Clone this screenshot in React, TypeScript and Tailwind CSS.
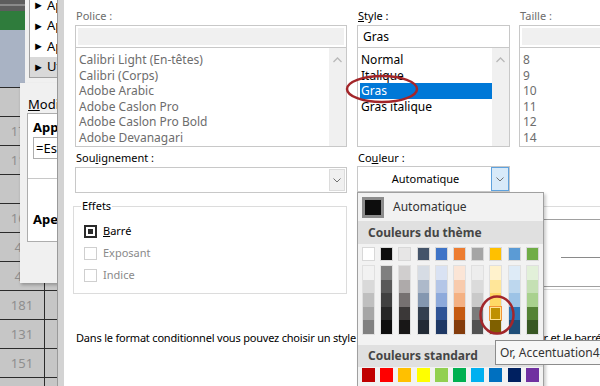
const themeTop = ["#ffffff", "#0d0d0d", "#e7e6e6", "#44546a", "#3f74c7", "#ed7d31", "#a5a5a5", "#ffc000", "#5b9bd5", "#70ad47"];

const themeShades = [
  ["#f2f2f2", "#d9d9d9", "#bfbfbf", "#a6a6a6", "#808080"],
  ["#7f7f7f", "#595959", "#404040", "#262626", "#0d0d0d"],
  ["#d0cece", "#aeaaaa", "#767171", "#3b3838", "#181717"],
  ["#d6dce4", "#adb9ca", "#8497b0", "#333f4f", "#222a35"],
  ["#d9e2f3", "#b4c6e7", "#8eaadb", "#2f5496", "#1f3864"],
  ["#fbe5d6", "#f8cbad", "#f4b183", "#c55a11", "#843c0c"],
  ["#ededed", "#dbdbdb", "#c9c9c9", "#7b7b7b", "#525252"],
  ["#fff2cc", "#ffe699", "#ffd966", "#bf9000", "#7f6000"],
  ["#deebf7", "#bdd7ee", "#9dc3e6", "#2e75b6", "#1f4e79"],
  ["#e2f0d9", "#c5e0b4", "#a9d18e", "#548235", "#385723"],
];

const standard = ["#c00000", "#ff0000", "#ffc000", "#ffff00", "#92d050", "#00b050", "#00b0f0", "#0070c0", "#002060", "#7030a0"];

const sheetRows = ["", "176", "115", "", "163", "45", "47", "181", "131", "151", ""];

function ChevronUp() {
  return (
    <svg width="9" height="6" viewBox="0 0 9 6">
      <path d="M0.5 5 L4.5 1 L8.5 5" fill="none" stroke="#b9b9b9" strokeWidth="1.3" />
    </svg>
  );
}

function ChevronDown() {
  return (
    <svg width="8" height="5" viewBox="0 0 8 5">
      <path d="M0.5 0.5 L4 4 L7.5 0.5" fill="none" stroke="#707070" strokeWidth="1" />
    </svg>
  );
}

function ListBox({ items, muted, selected, scroll }: { items: string[]; muted?: boolean; selected?: number; scroll?: boolean }) {
  return (
    <div className="flex h-[99px] border border-t-0 border-[#c8c8c8] bg-white">
      <div className="flex-1 pt-[4px] pl-[2px] overflow-hidden">
        {items.map((t, i) => (
          <div
            key={t}
            className={
              "h-[15.5px] leading-[15.5px] pl-[1px] whitespace-nowrap " +
              (i === selected ? "bg-[#0078d7] text-white" : muted ? "text-[#6d6d6d]" : "text-black")
            }
          >
            {t}
          </div>
        ))}
      </div>
      {scroll && (
        <div className="w-[17px] bg-[#f0f0f0] flex justify-center pt-[9px]">
          <ChevronUp />
        </div>
      )}
    </div>
  );
}

function EditBox({ value, disabled }: { value?: string; disabled?: boolean }) {
  return (
    <div className="h-[23px] border border-[#c8c8c8] bg-white p-[2px]">
      <div className={"h-full pl-[3px] leading-[17px] " + (disabled ? "bg-[#f0f0f0]" : "")}>{value}</div>
    </div>
  );
}

export default function App() {
  return (
    <div className="relative w-[600px] h-[386px] overflow-hidden bg-[#c6c6c6] text-[12px] text-black [font-family:'Noto_Sans',sans-serif]">
      {/* spreadsheet in the background */}
      <div className="absolute inset-0">
        <div className="h-[11px] bg-[#5d5d5d] pt-[4px]">
          <div className="h-[2px] bg-[#8a8a8a]" />
        </div>
        <div className="h-[19px] bg-[#2f7c3c]" />
        <div className="h-[57px] bg-[#a9b3c4]" />
        {sheetRows.map((v, i) => (
          <div key={i} className="h-[29px] flex border-t border-[#2b2b2b] bg-[#c6c6c6]">
            <div className="w-[45px] border-r border-[#2b2b2b] text-center leading-[28px] text-[13px] text-[#8e8e8e]">{v}</div>
            <div className="flex-1" />
          </div>
        ))}
      </div>

      {/* rule dialog behind: rule type list */}
      <div className="absolute left-[25px] top-0 w-[40px] h-[83px] bg-[#f0f0f0] pl-[4px]">
        <div className="h-[78px] border-l border-b border-[#a0a0a0] bg-white text-[13px] overflow-hidden">
          {["Ap", "Ap", "Ap", "Ut"].map((t, i) => (
            <div
              key={i}
              className={"h-[20.5px] flex items-center gap-[3px] pl-[3px] whitespace-nowrap " + (i === 3 ? "bg-[#d9d9d9]" : "")}
              style={{ marginTop: i === 0 ? -5 : 0 }}
            >
              <span className="text-[11px]">►</span>
              <span>{t}</span>
            </div>
          ))}
        </div>
      </div>

      {/* rule dialog behind: description */}
      <div className="absolute left-[20px] top-[83px] w-[45px] h-[200px] bg-[#f0f0f0] pl-[7px] shadow-[1px_2px_3px_rgba(0,0,0,0.25)] text-[13px]">
        <div className="h-[30px] pt-[12px] leading-[18px] pl-[1px]">
          <span className="underline">M</span>odif
        </div>
        <div className="h-[129px] border border-[#adadad] bg-white pl-[5px] pt-[4px] overflow-hidden">
          <div className="font-bold leading-[18px]">Appl</div>
          <div className="h-[22px] mt-[1px] border border-[#adadad] pl-[2px] leading-[20px] whitespace-nowrap">=EstN</div>
          <div className="-ml-[5px] mt-[19px] border-t border-[#c8c8c8]" />
          <div className="font-bold mt-[31px]">Aper</div>
        </div>
      </div>

      {/* main Format Cells dialog */}
      <div className="absolute left-[57px] top-0 right-0 bottom-0 flex">
        <div className="w-[7px] border-l border-[#9a9a9a] bg-[#d3d3d3]" />
        <div className="flex-1 bg-white pl-[11px] pt-[7px] overflow-hidden whitespace-nowrap">
          <div className="flex">
            <div className="w-[272px] shrink-0">
              <div className="h-[18px] leading-[18px] text-[11px] text-[#6d6d6d] pl-[1px]">Police :</div>
              <EditBox disabled />
              <ListBox
                muted
                scroll
                items={["Calibri Light (En-têtes)", "Calibri (Corps)", "Adobe Arabic", "Adobe Caslon Pro", "Adobe Caslon Pro Bold", "Adobe Devanagari"]}
              />
            </div>
            <div className="w-[153px] shrink-0 ml-[10px]">
              <div className="h-[18px] leading-[18px] text-[11px] pl-[1px]">
                <span className="underline">S</span>tyle :
              </div>
              <EditBox value="Gras" />
              <ListBox scroll selected={2} items={["Normal", "Italique", "Gras", "Gras italique"]} />
            </div>
            <div className="w-[100px] shrink-0 ml-[9px]">
              <div className="h-[18px] leading-[18px] text-[11px] text-[#6d6d6d] pl-[1px]">Taille :</div>
              <EditBox disabled />
              <ListBox muted items={["8", "9", "10", "11", "12", "14"]} />
            </div>
          </div>

          <div className="flex mt-[2px] text-[11px]">
            <div className="w-[272px] shrink-0">
              <div className="h-[18px] leading-[18px] pl-[1px]">
                Sou<span className="underline">l</span>ignement :
              </div>
              <div className="h-[26px] flex border border-[#c8c8c8] bg-white">
                <div className="flex-1" />
                <div className="w-[16px] my-[1px] mr-[1px] bg-[#f0f0f0] border border-[#dcdcdc] flex items-center justify-center">
                  <ChevronDown />
                </div>
              </div>
              <fieldset className="mt-[6px] -ml-[2px] h-[95px] border border-[#dcdcdc] pl-[10px]">
                <legend className="-ml-[3px] px-[1px] leading-[14px]">Effets</legend>
                <div className="flex items-center gap-[6px] h-[22px] mt-[7px]">
                  <div className="w-[13px] h-[13px] border-2 border-[#2a2a2a] flex items-center justify-center">
                    <div className="w-[5px] h-[5px] bg-[#2a2a2a]" />
                  </div>
                  <span>
                    <span className="underline">B</span>arré
                  </span>
                </div>
                <div className="flex items-center gap-[6px] h-[22px] text-[#8a8a8a]">
                  <div className="w-[13px] h-[13px] border border-[#cfcfcf]" />
                  <span>Exposant</span>
                </div>
                <div className="flex items-center gap-[6px] h-[22px] text-[#8a8a8a]">
                  <div className="w-[13px] h-[13px] border border-[#cfcfcf]" />
                  <span>Indice</span>
                </div>
              </fieldset>
            </div>
            <div className="w-[260px] shrink-0 ml-[10px]">
              <div className="h-[17px] leading-[17px] pl-[1px]">
                Co<span className="underline">u</span>leur :
              </div>
              <div className="w-[153px] h-[26px] flex border border-[#c8c8c8] bg-white">
                <div className="flex-1 text-center leading-[24px] pl-[2px]">Automatique</div>
                <div className="w-[18px] bg-[#d8eaf9] border border-[#5fa2dd] flex items-center justify-center">
                  <ChevronDown />
                </div>
              </div>
              <div className="mt-[14px] h-[84px] border border-[#dcdcdc] px-[6px] pt-[12px]">
                <div className="h-[68px] border border-[#a0a0a0] pt-[37px]">
                  <div className="ml-[196px] h-px bg-[#8a8a8a]" />
                </div>
              </div>
            </div>
          </div>

          <div className="mt-[36px] leading-[16px] text-[11px] tracking-[-0.2px] pl-[1px]">
            Dans le format conditionnel vous pouvez choisir un style de police, un soulignement, la couleur et le barré.
          </div>
        </div>
      </div>

      {/* colour picker drop-down */}
      <div className="absolute left-[357px] top-[192px] w-[187px] h-[200px] border border-[#a0a0a0] bg-[#f2f2f2] shadow-[2px_2px_3px_rgba(0,0,0,0.2)] text-[12px] text-[#333]">
        <div className="h-[28px] flex items-center pl-[4px]">
          <div className="w-[22px] h-[21px] border-[3px] border-[#8c8c8c] bg-[#0d0d0d]" />
          <span className="ml-[9px]">Automatique</span>
        </div>
        <div className="h-[23px] leading-[23px] bg-[#e0e0e0] pl-[10px] font-bold text-[#454545]">Couleurs du thème</div>
        <div className="mt-[3px] pl-[4px] grid grid-cols-[repeat(10,13px)] gap-x-[5.2px]">
          {themeTop.map((c) => (
            <div key={c} className="h-[14px] border border-[#d8d8d8]" style={{ backgroundColor: c }} />
          ))}
        </div>
        <div className="mt-[4px] pl-[4px] grid grid-cols-[repeat(10,13px)] gap-x-[5.2px]">
          {themeShades.map((col, ci) => (
            <div key={ci} className="flex flex-col border border-[#e0e0e0]">
              {col.map((c, ri) =>
                ci === 7 && ri === 3 ? (
                  <div key={ri} className="h-[13.6px] outline outline-1 outline-[#f29436] border border-[#ffe294]" style={{ backgroundColor: c }} />
                ) : (
                  <div key={ri} className="h-[13.6px]" style={{ backgroundColor: c }} />
                )
              )}
            </div>
          ))}
        </div>
        <div className="mt-[10px] h-[22px] leading-[22px] bg-[#e0e0e0] pl-[10px] font-bold text-[#454545]">Couleurs standard</div>
        <div className="mt-[1px] pl-[4px] grid grid-cols-[repeat(10,13px)] gap-x-[5.2px]">
          {standard.map((c) => (
            <div key={c} className="h-[14px]" style={{ backgroundColor: c }} />
          ))}
        </div>
      </div>

      {/* tooltip */}
      <div className="absolute left-[495px] top-[340px] h-[25px] border border-[#8c8c8c] bg-[#f7f7f7] pl-[4px] pr-[6px] leading-[23px] text-[12px] text-[#333] whitespace-nowrap">
        Or, Accentuation4, plus sombre 25%
      </div>

      {/* red annotation circles */}
      <svg className="absolute inset-0 pointer-events-none" width="600" height="386">
        <ellipse cx="382" cy="89" rx="35" ry="13" fill="none" stroke="#a3262a" strokeWidth="2.5" />
        <ellipse cx="497" cy="315" rx="16.5" ry="18.5" fill="none" stroke="#a3262a" strokeWidth="2.5" />
      </svg>
    </div>
  );
}
